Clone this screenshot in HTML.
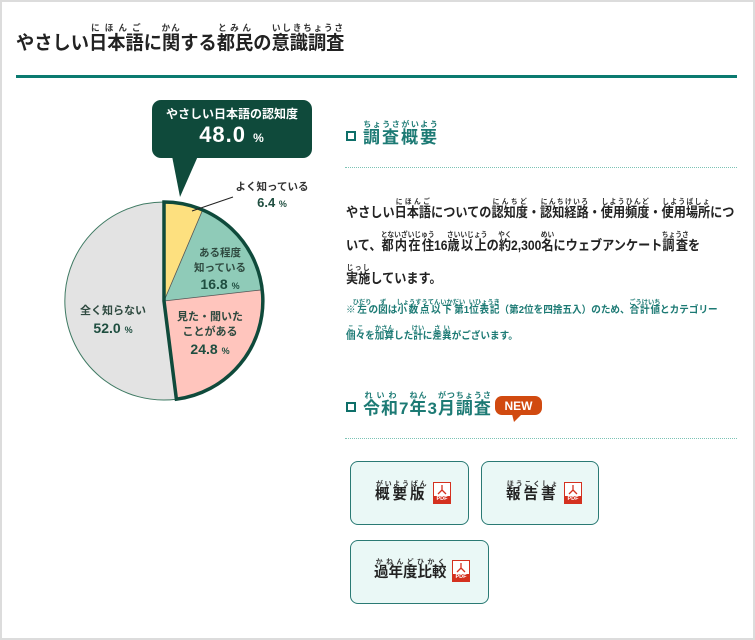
<!DOCTYPE html>
<html><head><meta charset="utf-8"><style>
*{margin:0;padding:0;box-sizing:border-box}
body{width:755px;height:614px;overflow:hidden;background:#fff;font-family:"Liberation Sans","Noto Sans CJK JP",sans-serif;font-weight:bold;color:#222}
#frame{position:absolute;left:0;top:0;width:755px;height:640px;border:2px solid #dcdcdc}
.a{position:absolute;white-space:nowrap}
ruby{ruby-position:over}
rt{font-size:8px;font-weight:bold;letter-spacing:0;color:#333}
.t rt{font-size:9px;letter-spacing:1px}
.h{color:#1c7a74;font-size:17px;letter-spacing:2px}
.h rt{color:#1c7a74;font-size:8px;letter-spacing:1px}
.sq{position:absolute;width:10px;height:10px;border:2px solid #0e6f69;background:#fff}
.dot{position:absolute;left:345px;width:392px;border-top:1px dotted #7cc3b5}
.body{font-size:13.5px;transform:scaleX(0.9);transform-origin:0 0}
.body rt{font-size:7.5px}
.note{font-size:10px;color:#1c7a74;transform:scaleX(0.96);transform-origin:0 0}
.note rt{font-size:6.5px;color:#1c7a74}
.btn{position:absolute;background:#eaf8f6;border:1.5px solid #2a7a74;border-radius:8px}
.btn .l{position:absolute;font-size:14.5px;letter-spacing:3px;text-align:center}
.btn rt{font-size:7px;letter-spacing:0}
.pdf{position:absolute;width:18px;height:22px;border:1.5px solid #d4311f;background:#fff}
.pdf b{position:absolute;left:0;bottom:0;width:100%;height:7px;background:#d4311f;color:#fff;font-size:5.5px;line-height:7px;text-align:center;font-family:"Liberation Sans",sans-serif}
.pdf svg{position:absolute;left:3px;top:1px}
</style></head><body>
<div id="frame"></div>
<div class="a t" style="left:16px;top:23px;font-size:19px;line-height:30px;transform:scaleX(0.96);transform-origin:0 0">やさしい<ruby>日本語<rt>にほんご</rt></ruby>に<ruby>関<rt>かん</rt></ruby>する<ruby>都民<rt>とみん</rt></ruby>の<ruby>意識調査<rt>いしきちょうさ</rt></ruby></div>
<div class="a" style="left:16px;top:75px;width:721px;height:3px;background:#0b7a70"></div>

<svg class="a" style="left:0;top:0" width="340" height="614">
<path d="M164,301 L164,202 A99,99 0 0,1 202.7,209.9Z" fill="#fde07f"/>
<path d="M164,301 L202.7,209.9 A99,99 0 0,1 262.4,289.8Z" fill="#8fcbb8"/>
<path d="M164,301 L262.4,289.8 A99,99 0 0,1 176.4,399.2Z" fill="#ffc5bd"/>
<path d="M164,301 L176.4,399.2 A99,99 0 1,1 164,202Z" fill="#e3e3e3" stroke="#3f7a63" stroke-width="1"/>
<path d="M164,301 L202.7,209.9 M164,301 L262.4,289.8" stroke="#555" stroke-width="0.8" fill="none"/>
<path d="M164,301 L164,202 A99,99 0 0,1 176.4,399.2Z" fill="none" stroke="#0f4a3b" stroke-width="3.5"/>
<line x1="192" y1="211" x2="233" y2="197" stroke="#222" stroke-width="1"/>
<rect x="152" y="100" width="160" height="58" rx="9" fill="#0f4a3b"/>
<path d="M172,156 L198,156 L180,197Z" fill="#0f4a3b"/>
</svg>
<div class="a" style="left:152px;top:106px;width:160px;text-align:center;color:#fff;font-size:12px;line-height:16px">やさしい日本語の認知度</div>
<div class="a" style="left:152px;top:122px;width:160px;text-align:center;color:#fff;font-size:22px;line-height:26px;letter-spacing:1px">48.0 <span style="font-size:12px">%</span></div>
<div class="a" style="left:230px;top:180px;width:84px;text-align:center;font-size:10.5px;line-height:15px;color:#333">よく知っている<br><span style="font-size:13px;color:#1f4e40">6.4 <small style="font-size:9px">%</small></span></div>
<div class="a" style="left:180px;top:246px;width:80px;text-align:center;font-size:10.5px;line-height:15px;color:#2f4a40">ある程度<br>知っている<br><span style="font-size:14px;line-height:16px;color:#1f4e40">16.8 <small style="font-size:9px">%</small></span></div>
<div class="a" style="left:170px;top:310px;width:80px;text-align:center;font-size:11px;line-height:15px;color:#2f4a40">見た・聞いた<br>ことがある<br><span style="font-size:14px;line-height:19px;color:#1f4e40">24.8 <small style="font-size:9px">%</small></span></div>
<div class="a" style="left:73px;top:304px;width:80px;text-align:center;font-size:11px;line-height:15px;color:#2f4a40">全く知らない<br><span style="font-size:14px;line-height:19px;color:#1f4e40">52.0 <small style="font-size:9px">%</small></span></div>

<div class="sq" style="left:346px;top:131px"></div>
<div class="a h" style="left:363px;top:120px;line-height:32px"><ruby>調査概要<rt>ちょうさがいよう</rt></ruby></div>
<div class="dot" style="top:167px"></div>
<div class="a body" style="left:346px;top:196px;line-height:33px">やさしい<ruby>日本語<rt>にほんご</rt></ruby>についての<ruby>認知度<rt>にんちど</rt></ruby>・<ruby>認知経路<rt>にんちけいろ</rt></ruby>・<ruby>使用頻度<rt>しようひんど</rt></ruby>・<ruby>使用場所<rt>しようばしょ</rt></ruby>につ<br>いて、<ruby>都内在住<rt>とないざいじゅう</rt></ruby>16<ruby>歳以上<rt>さいいじょう</rt></ruby>の<ruby>約<rt>やく</rt></ruby>2,300<ruby>名<rt>めい</rt></ruby>にウェブアンケート<ruby>調査<rt>ちょうさ</rt></ruby>を<br><ruby>実施<rt>じっし</rt></ruby>しています。</div>
<div class="a note" style="left:346px;top:298px;line-height:26px">※<ruby>左<rt>ひだり</rt></ruby>の<ruby>図<rt>ず</rt></ruby>は<ruby>小数点以下<rt>しょうすうてんいか</rt></ruby><ruby>第<rt>だい</rt></ruby>1<ruby>位表記<rt>いひょうき</rt></ruby>（第2位を四捨五入）のため、<ruby>合計値<rt>ごうけいち</rt></ruby>とカテゴリー<br><ruby>個々<rt>ここ</rt></ruby>を<ruby>加算<rt>かさん</rt></ruby>した<ruby>計<rt>けい</rt></ruby>に<ruby>差異<rt>さい</rt></ruby>がございます。</div>

<div class="sq" style="left:346px;top:402px"></div>
<div class="a h" style="left:363px;top:391px;line-height:32px;letter-spacing:1px"><ruby>令和<rt>れいわ</rt></ruby>7<ruby>年<rt>ねん</rt></ruby>3<ruby>月調査<rt>がつちょうさ</rt></ruby></div>
<svg class="a" style="left:494px;top:395px" width="50" height="28"><rect x="1" y="1" width="47" height="19" rx="7" fill="#d14a10"/><path d="M18,19 L28,19 L20,27Z" fill="#d14a10"/><text x="24.5" y="15" text-anchor="middle" fill="#fff" font-size="12" font-weight="bold" font-family="Liberation Sans">NEW</text></svg>
<div class="dot" style="top:438px"></div>

<div class="btn" style="left:350px;top:461px;width:119px;height:64px"><div class="l" style="left:24px;top:19px;line-height:26px"><ruby>概要版<rt>がいようばん</rt></ruby></div><div class="pdf" style="left:82px;top:20px"><svg width="10" height="11"><path d="M5,1 L5,6 M5,6 L1,10 M5,6 L9,10" stroke="#d4311f" stroke-width="1.3" fill="none"/></svg><b>PDF</b></div></div>
<div class="btn" style="left:481px;top:461px;width:118px;height:64px"><div class="l" style="left:24px;top:19px;line-height:26px"><ruby>報告書<rt>ほうこくしょ</rt></ruby></div><div class="pdf" style="left:82px;top:20px"><svg width="10" height="11"><path d="M5,1 L5,6 M5,6 L1,10 M5,6 L9,10" stroke="#d4311f" stroke-width="1.3" fill="none"/></svg><b>PDF</b></div></div>
<div class="btn" style="left:350px;top:540px;width:139px;height:64px"><div class="l" style="left:23px;top:18px;line-height:26px;letter-spacing:0"><ruby>過年度比較<rt>かねんどひかく</rt></ruby></div><div class="pdf" style="left:101px;top:19px"><svg width="10" height="11"><path d="M5,1 L5,6 M5,6 L1,10 M5,6 L9,10" stroke="#d4311f" stroke-width="1.3" fill="none"/></svg><b>PDF</b></div></div>
</body></html>
